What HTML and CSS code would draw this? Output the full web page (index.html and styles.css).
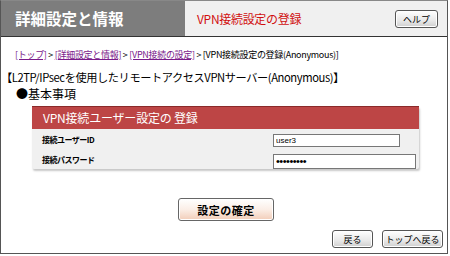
FILE: index.html
```html
<!DOCTYPE html>
<html lang="ja">
<head>
<meta charset="utf-8">
<link rel="stylesheet" href="styles.css">
</head>
<body>
<div class="frame">
  <div class="header">
    <div class="header-left">詳細設定と情報</div>
    <div class="header-right">
      <span class="page-title">VPN接続設定の登録</span>
      <button class="btn btn-help">ヘルプ</button>
    </div>
  </div>
  <div class="content">
    <div class="crumbs"><a href="#">[トップ]</a> &gt; <a href="#">[詳細設定と情報]</a> &gt; <a href="#">[VPN接続の設定]</a> &gt; [VPN接続設定の登録(Anonymous)]</div>
    <div class="heading">【L2TP/IPsecを使用したリモートアクセスVPNサーバー(Anonymous)】</div>
    <div class="subheading">●基本事項</div>
    <div class="panel">
      <div class="panel-head">VPN接続ユーザー設定の 登録</div>
      <div class="row">
        <span class="label">接続ユーザーID</span>
        <input class="field field-id" type="text" value="user3">
      </div>
      <div class="row">
        <span class="label">接続パスワード</span>
        <input class="field field-pw" type="password" value="123456789">
      </div>
    </div>
    <div class="confirm-wrap">
      <button class="btn-confirm">設定の確定</button>
    </div>
    <div class="nav">
      <button class="btn btn-back">戻る</button>
      <button class="btn btn-top">トップへ戻る</button>
    </div>
  </div>
</div>
</body>
</html>
```
FILE: styles.css
```css
* { box-sizing: border-box; }
html, body { margin: 0; padding: 0; background: #fff; }
body { font-family: "Noto Sans CJK JP", "DejaVu Sans", sans-serif; color: #000; }
.frame {
  width: 448px;
  height: 254px;
  border: 1px solid #555;
  border-top: 1px solid #888;
  display: flex;
  flex-direction: column;
}
.header {
  height: 36px;
  display: flex;
  border-bottom: 1px solid #333;
  flex: none;
}
.header-left {
  width: 184px;
  background: #7d7d7d;
  color: #fff;
  font-weight: bold;
  font-size: 15.5px;
  line-height: 35px;
  padding-left: 14px;
}
.header-right {
  flex: 1;
  background: #f0f0f0;
  display: flex;
  align-items: center;
  justify-content: space-between;
  padding: 0 9px 0 12px;
}
.page-title { color: #d01010; font-size: 12px; letter-spacing: -0.3px; }
.btn {
  font-family: inherit;
  font-size: 9px;
  height: 18px;
  padding: 0;
  border: 1px solid #555;
  border-radius: 3px;
  background: linear-gradient(#ffffff, #e8e8e8 60%, #cfcfcf);
  box-shadow: inset 0 0 0 1px #fff;
  color: #000;
  line-height: 15px;
}
.btn-help { width: 43px; margin-top: 1px; }
.content {
  flex: 1;
  display: flex;
  flex-direction: column;
}
.crumbs {
  margin-top: 12px;
  padding-left: 14px;
  font-size: 9px;
  line-height: 12px;
  letter-spacing: -0.3px;
}
.crumbs a { color: #7a1a8a; }
.heading {
  margin-top: 10px;
  font-size: 11.2px;
  line-height: 12px;
  letter-spacing: -0.4px;
  white-space: nowrap;
}
.subheading {
  font-size: 12px;
  line-height: 17px;
  margin-top: 2px;
  padding-left: 15px;
}
.panel {
  margin: 4px 0 0 31px;
  width: 387px;
  background: #f0f0f0;
  box-shadow: 1px 2px 2px #c8c8c8;
  border-radius: 2px;
}
.panel-head {
  height: 23px;
  background: #bd4545;
  border-top: 1px solid #8a2a2a;
  color: #fff;
  font-size: 12px;
  line-height: 21px;
  padding-left: 11px;
  letter-spacing: -0.2px;
}
.row {
  height: 20px;
  display: flex;
  align-items: center;
  padding-left: 10px;
}
.label {
  width: 231px;
  font-size: 8px;
  font-weight: bold;
  letter-spacing: -0.5px;
}
.field {
  font-family: "Liberation Sans", sans-serif;
  font-size: 8px;
  border: 1px solid #777;
  background: #fff;
  padding: 0 2px;
  margin: 0;
  outline: none;
}
.field-id { width: 127px; height: 13px; margin-top: 2px; }
.field-pw { width: 143px; height: 15px; margin-top: 4px; font-size: 11px; letter-spacing: -0.5px; }
.confirm-wrap {
  display: flex;
  justify-content: center;
  margin-top: 29px;
  padding-left: 4px;
}
.btn-confirm {
  font-family: inherit;
  width: 96px;
  height: 23px;
  font-size: 11px;
  font-weight: bold;
  border: 1px solid #666;
  border-radius: 3px;
  background: linear-gradient(#ffffff, #fbeee6 50%, #f2cdb8);
  box-shadow: inset 0 0 0 1px #fff;
  padding: 0;
  letter-spacing: 0.5px;
}
.nav {
  display: flex;
  justify-content: flex-end;
  gap: 9px;
  margin-top: 9px;
  padding-right: 4px;
}
.btn-back { width: 41px; }
.btn-top { width: 61px; }
```
